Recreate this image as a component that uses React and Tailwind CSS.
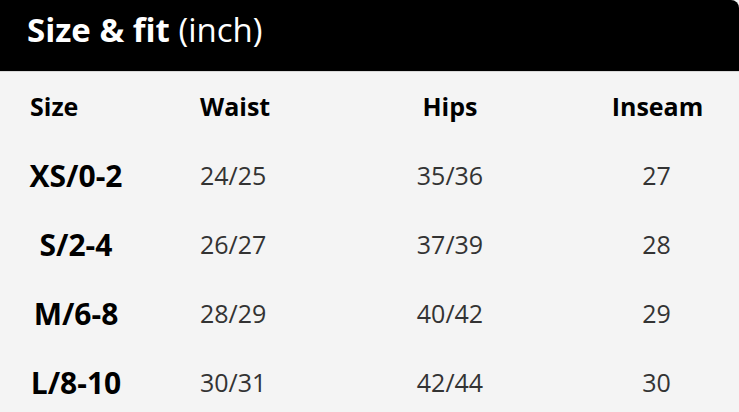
import React from 'react';

const rows = [
  { size: 'XS/0-2', waist: '24/25', hips: '35/36', inseam: '27' },
  { size: 'S/2-4', waist: '26/27', hips: '37/39', inseam: '28' },
  { size: 'M/6-8', waist: '28/29', hips: '40/42', inseam: '29' },
  { size: 'L/8-10', waist: '30/31', hips: '42/44', inseam: '30' },
];

// one line of the chart: 4 fixed-width cells
const Row = ({ a, b, c, d, head }) => (
  <div className="flex h-[69px] items-center">
    <div className={head ? 'w-[200px] pl-[30px] text-[25px] font-bold text-black' : 'w-[200px] pl-[28px]'}>
      {head ? a : <div className="w-[96px] text-center text-[30px] font-bold text-black">{a}</div>}
    </div>
    <div className={head ? 'w-[180px] text-[25px] font-bold text-black' : 'w-[180px] text-[25px] text-[#333]'}>{b}</div>
    <div className={head ? 'w-[140px] text-center text-[25px] font-bold text-black' : 'w-[140px] text-center text-[25px] text-[#333]'}>{c}</div>
    <div className={head ? 'flex-1 pl-[56px] text-center text-[25px] font-bold text-black' : 'flex-1 pl-[54px] text-center text-[25px] text-[#333]'}>{d}</div>
  </div>
);

export default function App() {
  return (
    <div className="h-[412px] w-[739px] overflow-hidden bg-[#f4f4f4] font-['Open_Sans',sans-serif] leading-none">
      <div className="h-[72px] rounded-tr-[8px] border-b border-[#d8d8d8] bg-black pl-[27px] pt-[13px] text-[33px] text-white">
        <span className="font-bold">Size &amp; fit</span> (inch)
      </div>
      <Row head a="Size" b="Waist" c="Hips" d="Inseam" />
      {rows.map((r) => (
        <Row key={r.size} a={r.size} b={r.waist} c={r.hips} d={r.inseam} />
      ))}
    </div>
  );
}
